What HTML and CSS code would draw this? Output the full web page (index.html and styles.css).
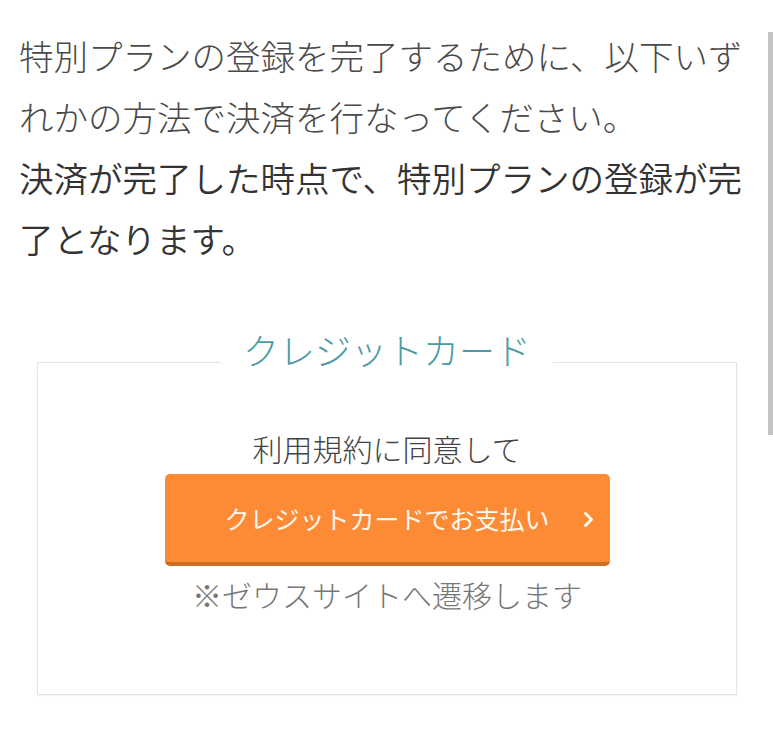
FILE: index.html
```html
<!DOCTYPE html>
<html lang="ja">
<head>
    <meta charset="UTF-8" />
    <title>お支払い方法 | 特別プラン</title>
    <meta name="viewport" content="width=device-width, initial-scale=1.0" />
    <link rel="stylesheet" href="styles.css">
</head>
<body>
    <div class="page">
        <p class="lead">
            <span class="lead-text">特別プランの登録を完了するために、以下いずれかの方法で決済を行なってください。</span><br>
            <strong class="lead-strong">決済が完了した時点で、特別プランの登録が完了となります。</strong>
        </p>

        <section class="pay">
            <div class="pay-head">
                <h2 class="pay-title">クレジットカード</h2>
            </div>
            <div class="pay-body">
                <p class="pay-agree">利用規約に同意して</p>
                <a class="pay-btn" href="#">
                    <span>クレジットカードでお支払い</span>
                    <svg class="pay-chev" width="11" height="17" viewBox="0 0 11 17" aria-hidden="true">
                        <path d="M2.5 2.5 L8.5 8.5 L2.5 14.5" fill="none" stroke="#fff8ee" stroke-width="3" stroke-linecap="round" stroke-linejoin="round" />
                    </svg>
                </a>
                <p class="pay-note">※ゼウスサイトへ遷移します</p>
            </div>
        </section>
    </div>

    <div class="scroll-thumb"></div>
</body>
</html>
```

FILE: styles.css
```css
:root {
    --text-color: #4a4a4a;
    --text-dark: #333333;
    --teal: #4b9ba6;
    --orange: #fd8a35;
    --orange-dark: #cf6d24;
    --border: #e4e4e4;
}

body {
    margin: 0;
    background: #ffffff;
    font-family: "Noto Sans CJK JP", "Noto Sans", sans-serif;
    color: var(--text-color);
}

.page {
    padding: 25px 19px 40px 19px;
}

/* Intro text */
.lead {
    margin: 0;
    font-size: 34.5px;
    line-height: 61px;
}

.lead-text {
    font-weight: 300;
    color: var(--text-color);
}

.lead-strong {
    font-weight: 350;
    color: var(--text-dark);
}

/* Payment card */
.pay {
    margin: 59px 17px 0 18px;
}

.pay-head {
    display: flex;
    align-items: flex-end;
}

.pay-head::before,
.pay-head::after {
    content: "";
    flex: 1;
    height: 7px;
    border-top: 1px solid var(--border);
}

.pay-head::before {
    border-left: 1px solid var(--border);
}

.pay-head::after {
    border-right: 1px solid var(--border);
}

.pay-title {
    margin: 0;
    padding: 0 22px;
    font-size: 36px;
    line-height: 42px;
    font-weight: 300;
    color: var(--teal);
}

.pay-body {
    display: flex;
    flex-direction: column;
    align-items: center;
    padding: 58px 0 80px;
    border: 1px solid var(--border);
    border-top: none;
    box-shadow: 0 1px 2px rgba(0, 0, 0, 0.05);
}

.pay-agree {
    margin: 0;
    font-size: 30px;
    line-height: 40px;
    font-weight: 300;
    color: #444;
}

.pay-btn {
    position: relative;
    display: flex;
    justify-content: center;
    align-items: center;
    box-sizing: border-box;
    width: 445px;
    height: 92px;
    margin-top: 6px;
    background: var(--orange);
    border-bottom: 4px solid var(--orange-dark);
    border-radius: 5px;
    color: #fff8ee;
    font-size: 25px;
    font-weight: 400;
    text-decoration: none;
}

.pay-chev {
    position: absolute;
    right: 16px;
    top: 37px;
}

.pay-note {
    margin: 8px 0 0;
    font-size: 30px;
    line-height: 40px;
    font-weight: 300;
    color: #777;
}

/* Mobile scroll indicator */
.scroll-thumb {
    position: fixed;
    top: 32px;
    right: 0;
    width: 5px;
    height: 403px;
    background: #c4c4c4;
}
```
